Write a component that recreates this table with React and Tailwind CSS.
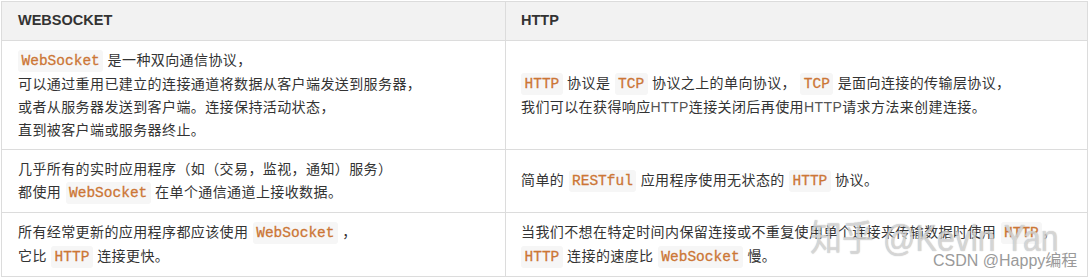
import React from "react";

const Code = ({ children }) => (
  <code className="rounded-[3px] bg-[#f6f6f6] px-[3.5px] py-[3px] font-['Liberation_Mono',monospace] text-[14.5px] tracking-normal text-[#cc7636] [-webkit-text-stroke:0.3px_#cc7636]">
    {children}
  </code>
);

const rows = [
  {
    h: "h-[109px]",
    left: (
      <>
        <Code>WebSocket</Code> 是一种双向通信协议，
        <br />
        可以通过重用已建立的连接通道将数据从客户端发送到服务器，
        <br />
        或者从服务器发送到客户端。连接保持活动状态，
        <br />
        直到被客户端或服务器终止。
      </>
    ),
    right: (
      <>
        <Code>HTTP</Code> 协议是 <Code>TCP</Code> 协议之上的单向协议， <Code>TCP</Code>{" "}
        是面向连接的传输层协议，
        <br />
        我们可以在获得响应<span className="font-light text-[#555]">HTTP</span>连接关闭后再使用
        <span className="font-light text-[#555]">HTTP</span>请求方法来创建连接。
      </>
    ),
  },
  {
    h: "h-[63px]",
    left: (
      <>
        几乎所有的实时应用程序（如（交易，监视，通知）服务）
        <br />
        都使用 <Code>WebSocket</Code> 在单个通信通道上接收数据。
      </>
    ),
    right: (
      <>
        简单的 <Code>RESTful</Code> 应用程序使用无状态的 <Code>HTTP</Code> 协议。
      </>
    ),
  },
  {
    h: "h-[64px]",
    left: (
      <>
        所有经常更新的应用程序都应该使用 <Code>WebSocket</Code> ，
        <br />
        它比 <Code>HTTP</Code> 连接更快。
      </>
    ),
    right: (
      <>
        当我们不想在特定时间内保留连接或不重复使用单个连接来传输数据时使用 <Code>HTTP</Code>，
        <br />
        <Code>HTTP</Code> 连接的速度比 <Code>WebSocket</Code> 慢。
      </>
    ),
  },
];

export default function App() {
  return (
    <div className="relative h-[279px] w-[1090px] overflow-hidden bg-white pl-[1px] pt-[1px] font-['Liberation_Sans','Noto_Sans_CJK_SC',sans-serif] text-[#333]">
      {/* TABLE */}
      <table className="w-[1087px] table-fixed border-collapse">
        <colgroup>
          <col className="w-[504px]" />
          <col />
        </colgroup>
        <thead>
          <tr className="h-[39px] bg-[#f2f2f2]">
            <th className="border border-[#dcdcdc] pl-[16px] text-left text-[14.5px] font-bold">
              WEBSOCKET
            </th>
            <th className="border border-[#dcdcdc] pl-[15px] text-left text-[14.5px] font-bold">
              HTTP
            </th>
          </tr>
        </thead>
        <tbody>
          {rows.map((r, i) => (
            <tr key={i} className={r.h}>
              <td className="border border-[#dcdcdc] pl-[16px] align-middle text-[14px] leading-[23px] tracking-[0.4px]">
                {r.left}
              </td>
              <td className="border border-[#dcdcdc] pl-[15px] align-middle text-[14px] leading-[23px] tracking-[0.4px] whitespace-nowrap">
                {r.right}
              </td>
            </tr>
          ))}
        </tbody>
      </table>

      {/* WATERMARKS */}
      <div className="pointer-events-none absolute left-[810px] top-[221px] origin-left scale-x-[0.89] whitespace-nowrap text-[36px] leading-none text-[rgba(232,232,232,0.7)] [text-shadow:0_0_1px_rgba(110,110,110,0.6)]">
        知乎 @Kevin Yan
      </div>
      <div className="pointer-events-none absolute left-[933px] top-[253px] text-[16px] leading-none text-[#9a9a9a] [text-shadow:0_0_2px_#fff]">
        CSDN @Happy编程
      </div>
    </div>
  );
}
